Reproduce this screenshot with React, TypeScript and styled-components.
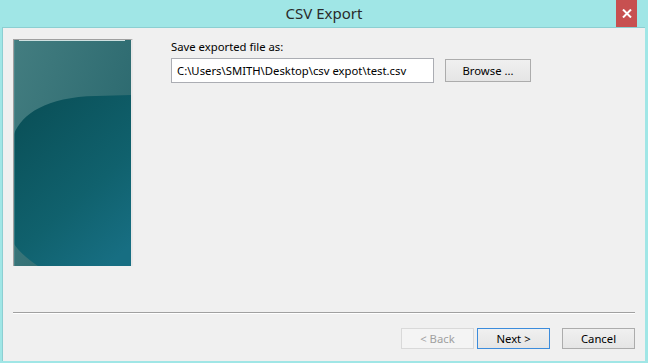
import React from 'react'
import styled, { createGlobalStyle } from 'styled-components'

const GlobalStyle = createGlobalStyle`
  html, body {
    margin: 0;
    padding: 0;
    width: 648px;
    height: 363px;
    overflow: hidden;
    background: #a0e6e6;
  }
  * { box-sizing: border-box; }
`

const Window = styled.div`
  width: 648px;
  height: 363px;
  display: flex;
  flex-direction: column;
  background: #a0e6e6;
  font-family: 'Noto Sans', 'Open Sans', sans-serif;
  font-size: 11.3px;
  color: #000;
`

const TitleBar = styled.div`
  height: 27px;
  display: flex;
  align-items: flex-start;
  justify-content: flex-end;
  position: relative;
`

const Title = styled.div`
  position: absolute;
  left: 0;
  right: 0;
  top: 3px;
  text-align: center;
  font-size: 15px;
  color: #2a2a2a;
`

const CloseButton = styled.div`
  width: 21px;
  height: 27px;
  margin-right: 11px;
  background: #c75050;
  display: flex;
  align-items: center;
  justify-content: center;
  z-index: 1;
`

const Client = styled.div`
  flex: 1;
  margin: 0 3px 2px 2px;
  background: #f0f0f0;
  border-top: 1px solid #8ccfd2;
  border-left: 1px solid #8ccfd2;
  display: flex;
  flex-direction: column;
  padding: 11px 10px 12px 10px;
`

const Body = styled.div`
  flex: 1;
  display: flex;
  align-items: flex-start;
`

const PictureFrame = styled.div`
  width: 120px;
  height: 227px;
  border-left: 1px solid #a0a0a0;
  border-top: 1px solid #a0a0a0;
  border-right: 2px solid #e8e8e8;
  display: flex;
`

const Content = styled.div`
  margin-left: 38px;
  display: flex;
  flex-direction: column;
`

const Label = styled.div`
  height: 19px;
  line-height: 16px;
  color: #000;
`

const Row = styled.div`
  display: flex;
  align-items: center;
  gap: 11px;
`

const PathInput = styled.input`
  width: 263px;
  height: 25px;
  border: 1px solid #abadb3;
  background: #fff;
  padding: 0 5px;
  font-family: inherit;
  font-size: 11.3px;
  color: #000;
  outline: none;
`

const Separator = styled.div`
  height: 2px;
  border-top: 1px solid #a0a0a0;
  border-bottom: 1px solid #fff;
`

const ButtonRow = styled.div`
  margin-top: 14px;
  display: flex;
  justify-content: flex-end;
  align-items: center;
`

const Button = styled.button<{ $primary?: boolean; $gap?: number }>`
  width: 73px;
  height: 21px;
  margin-left: ${p => p.$gap ?? 0}px;
  padding: 0;
  font-family: inherit;
  font-size: 11.3px;
  color: ${p => (p.disabled ? '#a0a0a0' : '#000')};
  background: ${p =>
    p.disabled ? '#f4f4f4' : 'linear-gradient(#f0f0f0, #e5e5e5)'};
  border: 1px solid
    ${p => (p.disabled ? '#d9d9d9' : p.$primary ? '#3c8cdc' : '#acacac')};
`

const BrowseButton = styled(Button)`
  width: 86px;
  height: 23px;
`

function SidePicture() {
  return (
    <svg width="117" height="226" viewBox="0 0 117 226">
      <defs>
        <linearGradient id="topg" x1="0" y1="0" x2="1" y2="0.6">
          <stop offset="0" stopColor="#437d80" />
          <stop offset="1" stopColor="#2a686e" />
        </linearGradient>
        <linearGradient id="darkg" x1="0.2" y1="0" x2="0.8" y2="1">
          <stop offset="0" stopColor="#0a5058" />
          <stop offset="0.6" stopColor="#10616d" />
          <stop offset="1" stopColor="#176e82" />
        </linearGradient>
      </defs>
      <rect width="117" height="226" fill="url(#topg)" />
      <path
        d="M0,94 C8,74 32,57 82,56 L117,55 L117,226 L24,226 C13,219 5,211 0,204 Z"
        fill="url(#darkg)"
      />
      <line x1="5" y1="0.5" x2="111" y2="0.5" stroke="#cfe0e0" strokeWidth="1" />
      <rect x="0" y="0" width="1" height="226" fill="#5a9498" opacity="0.5" />
    </svg>
  )
}

export default function App() {
  return (
    <Window>
      <GlobalStyle />
      <TitleBar>
        <Title>CSV Export</Title>
        <CloseButton>
          <svg width="10" height="9" viewBox="0 0 10 9">
            <path d="M1,0.5 L9,8.5 M9,0.5 L1,8.5" stroke="#fff" strokeWidth="2" />
          </svg>
        </CloseButton>
      </TitleBar>
      <Client>
        <Body>
          <PictureFrame>
            <SidePicture />
          </PictureFrame>
          <Content>
            <Label>Save exported file as:</Label>
            <Row>
              <PathInput readOnly value="C:\Users\SMITH\Desktop\csv expot\test.csv" />
              <BrowseButton>Browse ...</BrowseButton>
            </Row>
          </Content>
        </Body>
        <Separator />
        <ButtonRow>
          <Button disabled>&lt; Back</Button>
          <Button $primary $gap={3}>Next &gt;</Button>
          <Button $gap={12}>Cancel</Button>
        </ButtonRow>
      </Client>
    </Window>
  )
}
